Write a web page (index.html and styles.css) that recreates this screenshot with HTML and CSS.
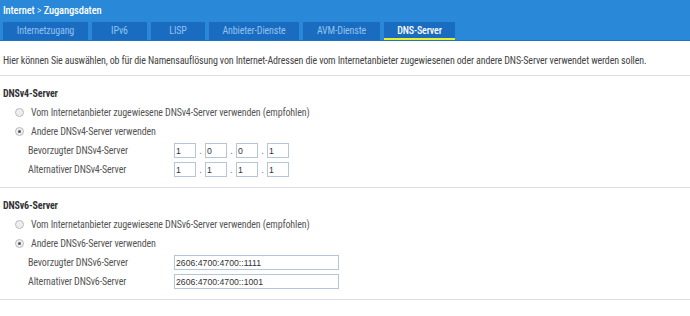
FILE: index.html
```html
<!DOCTYPE html>
<html lang="de">
<head>
    <meta charset="UTF-8">
    <title>Internet &gt; Zugangsdaten</title>
    <link rel="stylesheet" href="styles.css">
</head>
<body>
    <header class="top">
        <div class="crumb">Internet <span class="sep">&gt;</span> Zugangsdaten</div>
        <nav class="tabs">
            <a class="tab" href="#">Internetzugang</a>
            <a class="tab" href="#">IPv6</a>
            <a class="tab" href="#">LISP</a>
            <a class="tab" href="#">Anbieter-Dienste</a>
            <a class="tab" href="#">AVM-Dienste</a>
            <a class="tab active" href="#">DNS-Server</a>
        </nav>
    </header>

    <p class="intro">Hier können Sie auswählen, ob für die Namensauflösung von Internet-Adressen die vom Internetanbieter zugewiesenen oder andere DNS-Server verwendet werden sollen.</p>

    <section class="block">
        <h2>DNSv4-Server</h2>
        <label class="opt"><span class="radio"></span>Vom Internetanbieter zugewiesene DNSv4-Server verwenden (empfohlen)</label>
        <label class="opt"><span class="radio on"></span>Andere DNSv4-Server verwenden</label>
        <div class="row">
            <span class="lbl">Bevorzugter DNSv4-Server</span>
            <div class="ip">
                <input class="oct" value="1"><span class="dot">.</span>
                <input class="oct" value="0"><span class="dot">.</span>
                <input class="oct" value="0"><span class="dot">.</span>
                <input class="oct" value="1">
            </div>
        </div>
        <div class="row">
            <span class="lbl">Alternativer DNSv4-Server</span>
            <div class="ip">
                <input class="oct" value="1"><span class="dot">.</span>
                <input class="oct" value="1"><span class="dot">.</span>
                <input class="oct" value="1"><span class="dot">.</span>
                <input class="oct" value="1">
            </div>
        </div>
    </section>

    <section class="block">
        <h2>DNSv6-Server</h2>
        <label class="opt"><span class="radio"></span>Vom Internetanbieter zugewiesene DNSv6-Server verwenden (empfohlen)</label>
        <label class="opt"><span class="radio on"></span>Andere DNSv6-Server verwenden</label>
        <div class="row">
            <span class="lbl">Bevorzugter DNSv6-Server</span>
            <input class="v6" value="2606:4700:4700::1111">
        </div>
        <div class="row">
            <span class="lbl">Alternativer DNSv6-Server</span>
            <input class="v6" value="2606:4700:4700::1001">
        </div>
    </section>
</body>
</html>
```

FILE: styles.css
```css
body {
    margin: 0;
    background: #fff;
    font-family: Roboto, sans-serif;
    font-stretch: condensed;
    font-size: 10px;
    letter-spacing: -0.14px;
    color: #444;
}
.top {
    background-color: #2a88d8;
    padding: 3px 3px 0;
    border-bottom: 1px solid #1f73c4;
}
.crumb {
    color: #fff;
    font-weight: 500;
    font-size: 10.5px;
    height: 19px;
    line-height: 15px;
}
.crumb .sep {
    font-weight: 300;
}
.tabs {
    display: flex;
    gap: 4px;
}
.tab {
    flex: none;
    height: 18px;
    line-height: 17px;
    box-sizing: border-box;
    text-align: center;
    background-color: #1a6cc0;
    color: #8fc3f0;
    text-decoration: none;
    border-bottom: 2px solid transparent;
}
.tab:nth-child(1) { width: 85px; }
.tab:nth-child(2) { width: 55px; }
.tab:nth-child(3) { width: 54px; }
.tab:nth-child(4) { width: 90px; }
.tab:nth-child(5) { width: 77px; }
.tab:nth-child(6) { width: 71px; }
.tab.active {
    color: #fff;
    font-weight: 500;
    border-bottom-color: #e6ef2a;
}
.intro {
    margin: 0;
    padding: 14px 3px 9px;
    border-bottom: 1px solid #ddd;
}
.block {
    padding: 9px 3px 8px;
    border-bottom: 1px solid #ddd;
}
.block h2 {
    margin: 0;
    font-size: 10px;
    font-weight: bold;
    color: #333;
    line-height: 18px;
}
.opt {
    display: flex;
    align-items: center;
    height: 19px;
    margin-left: 12px;
    color: #555;
}
.radio {
    width: 7px;
    height: 7px;
    border: 1px solid #bbb;
    border-radius: 50%;
    background: #eee;
    margin-right: 7px;
    position: relative;
}
.radio.on::after {
    content: "";
    position: absolute;
    left: 2px;
    top: 2px;
    width: 3px;
    height: 3px;
    border-radius: 50%;
    background: #555;
}
.row {
    display: flex;
    align-items: center;
    height: 19px;
    margin-left: 25px;
    color: #555;
}
.lbl {
    width: 146px;
}
.ip {
    display: flex;
    align-items: center;
}
input {
    font-family: "Liberation Sans", Arial, sans-serif;
    font-size: 8.7px;
    color: #333;
    border: 1px solid #b4c6d8;
    padding: 0 1px;
    height: 15px;
    box-sizing: border-box;
    margin: 0;
}
.oct {
    width: 22px;
}
.dot {
    width: 9px;
    text-align: center;
    color: #777;
}
.v6 {
    width: 165px;
}
```
